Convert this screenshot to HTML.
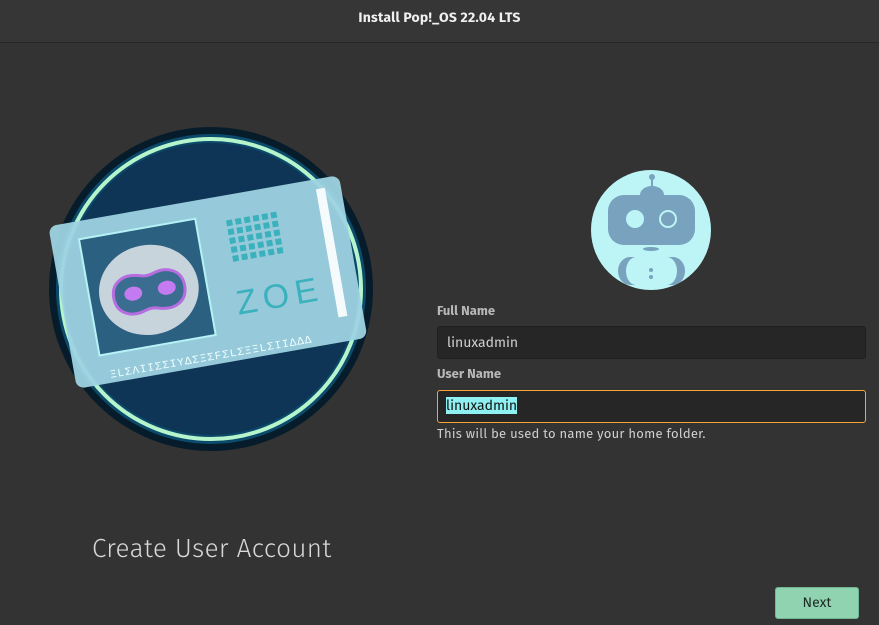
<!DOCTYPE html>
<html><head><style>
html,body{margin:0;padding:0;width:879px;height:625px;overflow:hidden;background:#333333;font-family:"Fira Sans","Liberation Sans",sans-serif;}
.hdr{position:absolute;left:0;top:0;width:879px;height:42px;background:#363636;border-bottom:1px solid #262626;}
.hdr span{position:absolute;left:0;right:0;top:9px;text-align:center;color:#f0f0f0;font-weight:bold;font-size:14px;letter-spacing:0.2px}
.lbl{position:absolute;left:437px;color:#b8b8b8;font-weight:bold;font-size:13px;}
.inp{position:absolute;left:437px;width:429px;height:33px;background:#262626;border:1px solid #202020;border-radius:3px;box-sizing:border-box;}
.inp span{position:absolute;left:9px;top:7px;font-size:14px;color:#d0d0d0;}
.title{position:absolute;left:92px;top:533px;font-size:26px;color:#d8d8d8;font-weight:300;letter-spacing:0.4px}
.btn{position:absolute;left:775px;top:587px;width:84px;height:32px;background:#8fd3b0;border:1px solid #6fb890;border-radius:3px;box-sizing:border-box;text-align:center;line-height:30px;font-size:14px;color:#1d2b24;}
</style></head><body>
<div class="hdr"><span>Install Pop!_OS 22.04 LTS</span></div>
<svg style="position:absolute;left:0;top:0" width="430" height="625">
<circle cx="211" cy="289" r="162" fill="#061c2b"/>
<circle cx="211" cy="289" r="155" fill="#0b4a6a"/>
<circle cx="211" cy="289" r="150" fill="none" stroke="#b6f5cc" stroke-width="4"/>
<circle cx="211" cy="289" r="146" fill="#0f3556"/>
<g transform="rotate(-10 205 280)">
<rect x="60" y="200" width="295" height="165" rx="8" fill="#9ed3e2" opacity="0.95"/>
<rect x="88" y="218" width="118" height="118" fill="#2c6080" stroke="#b4f2f5" stroke-width="2"/>
<ellipse cx="148" cy="280" rx="50" ry="45" fill="#c8d4dc"/>
<path d="M112 282c0-16 14-22 28-18 6 2 10 2 16 0 14-4 28 2 28 18s-14 22-28 18c-6-2-10-2-16 0-14 4-28-2-28-18z" fill="#3a6d90" stroke="#b66de0" stroke-width="3"/>
<ellipse cx="132" cy="281" rx="9" ry="7" fill="#c47af0"/>
<ellipse cx="166" cy="281" rx="9" ry="7" fill="#c47af0"/>
<text x="232" y="320" font-size="34" fill="#3ab1bc" font-family="Liberation Sans" letter-spacing="6">ZOE</text>
<text x="95" y="360" font-size="11" fill="#f0ffff" font-family="Liberation Mono" letter-spacing="1">ΞLΣΛIIΣΣIYΔΣΞΣFΣLΣΞΞLΣIIΔΔΔ</text>
</g>
<g transform="rotate(-10 205 280)" fill="#3ab1bc">
<rect x="236" y="225" width="6" height="6"/><rect x="245" y="225" width="6" height="6"/><rect x="254" y="225" width="6" height="6"/><rect x="263" y="225" width="6" height="6"/><rect x="272" y="225" width="6" height="6"/><rect x="281" y="225" width="6" height="6"/>
<rect x="236" y="234" width="6" height="6"/><rect x="245" y="234" width="6" height="6"/><rect x="254" y="234" width="6" height="6"/><rect x="263" y="234" width="6" height="6"/><rect x="272" y="234" width="6" height="6"/><rect x="281" y="234" width="6" height="6"/>
<rect x="236" y="243" width="6" height="6"/><rect x="245" y="243" width="6" height="6"/><rect x="254" y="243" width="6" height="6"/><rect x="263" y="243" width="6" height="6"/><rect x="272" y="243" width="6" height="6"/><rect x="281" y="243" width="6" height="6"/>
<rect x="236" y="252" width="6" height="6"/><rect x="245" y="252" width="6" height="6"/><rect x="254" y="252" width="6" height="6"/><rect x="263" y="252" width="6" height="6"/><rect x="272" y="252" width="6" height="6"/><rect x="281" y="252" width="6" height="6"/>
<rect x="236" y="261" width="6" height="6"/><rect x="245" y="261" width="6" height="6"/><rect x="254" y="261" width="6" height="6"/><rect x="263" y="261" width="6" height="6"/><rect x="272" y="261" width="6" height="6"/><rect x="281" y="261" width="6" height="6"/>
<rect x="330" y="210" width="9" height="130" fill="#fff" opacity="0.9"/>
</g>
</svg>
<svg style="position:absolute;top:170px;left:590px" width="122" height="122" viewBox="0 0 122 122">
<defs><clipPath id="c"><circle cx="61" cy="60" r="60"/></clipPath></defs>
<circle cx="61" cy="60" r="60" fill="#bdf5f7"/>
<g clip-path="url(#c)" fill="#78a2bd">
<circle cx="62" cy="7" r="3"/><rect x="61" y="7" width="2" height="9"/>
<path d="M50 25a12 9 0 0 1 24 0z"/>
<rect x="18" y="25" width="87" height="50" rx="16"/>
<circle cx="45" cy="49" r="9" fill="#bdf5f7"/>
<circle cx="78" cy="49" r="8" fill="none" stroke="#bdf5f7" stroke-width="2"/>
<ellipse cx="61" cy="79" rx="8" ry="2"/>
<path d="M40 87a12 14 0 0 0 0 28h6a10 14 0 0 1 0-28z"/>
<path d="M83 87a12 14 0 0 1 0 28h-6a10 14 0 0 0 0-28z"/>
<circle cx="61" cy="100" r="2"/><circle cx="61" cy="107" r="2"/>
</g>
</svg>
<div class="lbl" style="top:304px">Full Name</div>
<div class="inp" style="top:326px"><span>linuxadmin</span></div>
<div class="lbl" style="top:367px">User Name</div>
<div class="inp" style="top:390px;border:1px solid #f5a53a;"><span style="top:6px;left:8px;background:#8ef0f0;color:#111;">linuxadmin</span></div>
<div style="position:absolute;left:437px;top:427px;font-size:13px;color:#cfcfcf;letter-spacing:0.25px">This will be used to name your home folder.</div>
<div class="title">Create User Account</div>
<div class="btn">Next</div>
</body></html>
